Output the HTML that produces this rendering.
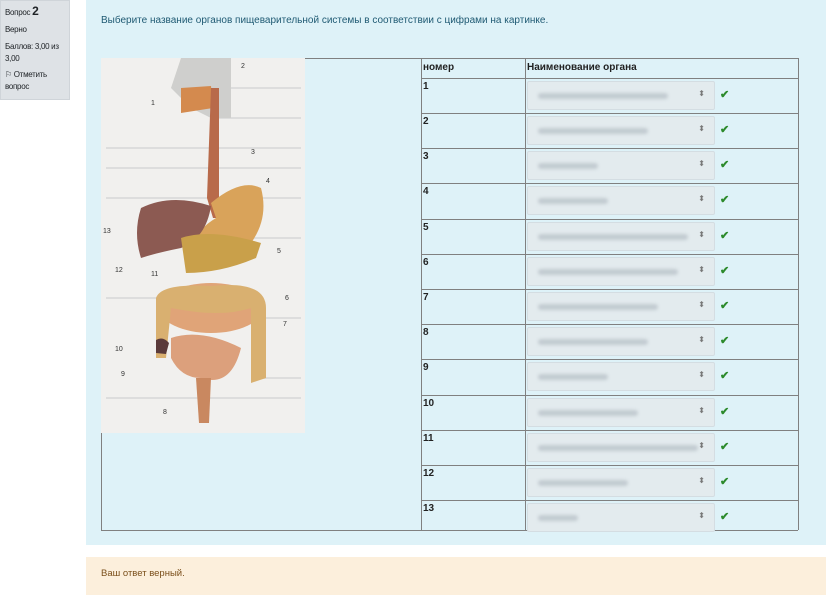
<!DOCTYPE html>
<html><head><meta charset="utf-8"><style>
*{margin:0;padding:0;box-sizing:border-box}
body{width:826px;height:601px;background:#fff;font-family:"Liberation Sans",sans-serif;position:relative;overflow:hidden;color:#1d2125}
.side{position:absolute;left:0;top:0;width:70px;height:100px;background:#dee2e6;border:1px solid #cfd4d9;padding:4px 4px;font-size:8px;line-height:12px;color:#1d2125;letter-spacing:-0.3px}
.side b{font-size:12px}
.panel{position:absolute;left:86px;top:0;width:740px;height:545px;background:#def2f8}
.q{position:absolute;left:101px;top:15px;font-size:10px;color:#1f5a73}
.fb{position:absolute;left:86px;top:557px;width:740px;height:38px;background:#fcefdc;font-size:9.5px;color:#7a4f1b;padding:11px 0 0 15px}
.l{position:absolute;background:#808080}
.num{position:absolute;left:423px;font-size:10px;font-weight:bold;color:#222}
.sel{position:absolute;left:527px;width:188px;height:29px;background:#e3ebee;border:1px solid #d4dde2;border-radius:2px}
.sel i{position:absolute;left:10px;top:11px;height:6px;background:#c2cbd1;border-radius:3px;filter:blur(1.5px)}
.sel span{position:absolute;right:9px;top:7px;font-size:8px;color:#777}
.ck{position:absolute;left:720px;color:#2c8a2c;font-size:11px;font-weight:bold}
</style></head><body>
<div class="side">Вопрос <b>2</b><br><span style="line-height:22px">Верно</span><br>Баллов: 3,00 из 3,00<br><div style="margin-top:4px">⚐ Отметить вопрос</div></div>
<div class="panel"></div>
<div class="q">Выберите название органов пищеварительной системы в соответствии с цифрами на картинке.</div>
<svg style="position:absolute;left:101px;top:58px" width="204" height="375" viewBox="0 0 204 375">
<rect width="204" height="375" fill="#f1f0ee"/>
<g stroke="#ddd" stroke-width="2">
<line x1="110" y1="30" x2="200" y2="30"/><line x1="110" y1="60" x2="200" y2="60"/><line x1="5" y1="90" x2="200" y2="90"/><line x1="5" y1="110" x2="200" y2="110"/><line x1="5" y1="140" x2="200" y2="140"/><line x1="150" y1="180" x2="200" y2="180"/><line x1="5" y1="240" x2="60" y2="240"/><line x1="150" y1="260" x2="200" y2="260"/><line x1="150" y1="320" x2="200" y2="320"/><line x1="5" y1="340" x2="200" y2="340"/></g>
<path d="M80 0 H130 V60 H110 L90 50 L70 30 Z" fill="#cfcfcd"/>
<path d="M80 30 L110 28 L112 50 L80 55 Z" fill="#d48a4e"/>
<path d="M110 30 L118 30 L118 140 L122 160 L112 160 L106 140 Z" fill="#b86a4a"/>
<path d="M110 145 Q140 120 160 130 Q168 160 150 185 Q130 200 100 190 Q90 175 115 160 Z" fill="#d9a35a"/>
<path d="M40 150 Q70 135 110 148 Q105 180 80 190 Q55 195 40 200 Q32 175 40 150 Z" fill="#8c5a52"/>
<path d="M80 180 Q110 170 160 185 L155 200 Q120 215 85 215 Z" fill="#c9a04a"/>
<ellipse cx="110" cy="250" rx="52" ry="25" fill="#e0a478"/>
<path d="M55 240 Q60 225 110 228 Q165 222 165 250 L165 320 L150 325 L150 250 Q120 260 70 250 L65 300 L55 300 Z" fill="#d9b070"/>
<path d="M70 280 Q100 270 140 290 Q130 330 100 320 Q80 320 70 300 Z" fill="#dca07c"/>
<path d="M95 320 L110 320 L108 365 L98 365 Z" fill="#c98860"/>
<path d="M55 282 Q62 278 68 285 L65 296 L55 295 Z" fill="#5a3a3a"/>
<g font-size="7" fill="#333"><text x="50" y="47">1</text><text x="140" y="10">2</text><text x="150" y="96">3</text><text x="165" y="125">4</text><text x="176" y="195">5</text><text x="184" y="242">6</text><text x="182" y="268">7</text><text x="62" y="356">8</text><text x="20" y="318">9</text><text x="14" y="293">10</text><text x="50" y="218">11</text><text x="14" y="214">12</text><text x="2" y="175">13</text></g>
</svg>
<div class="l" style="left:305px;top:58px;width:493px;height:1px"></div>
<div class="l" style="left:101px;top:433px;width:1px;height:97px"></div>
<div class="l" style="left:101px;top:530px;width:697px;height:1px"></div>
<div class="l" style="left:421px;top:58px;width:1px;height:472px"></div>
<div class="l" style="left:525px;top:58px;width:1px;height:472px"></div>
<div class="l" style="left:798px;top:58px;width:1px;height:472px"></div>
<div class="num" style="top:62px;">номер</div>
<div class="num" style="top:62px;left:527px">Наименование органа</div>
<div id="rows"></div>
<div class="fb">Ваш ответ верный.</div>
<script>
var t=[78,113,148,183,219,254,289,324,359,395,430,465,500];var w=[130,110,60,70,150,140,120,110,70,100,160,90,40];var h='';
for(var i=0;i<13;i++){var y=t[i];
h+='<div class="l" style="left:421px;top:'+y+'px;width:377px;height:1px"></div>';
h+='<div class="num" style="top:'+(y+3)+'px">'+(i+1)+'</div>';
h+='<div class="sel" style="top:'+(y+3)+'px"><i style="width:'+w[i]+'px"></i><span>⬍</span></div>';
h+='<div class="ck" style="top:'+(y+10)+'px">✔</div>';}
document.getElementById('rows').innerHTML=h;
</script>
</body></html>
